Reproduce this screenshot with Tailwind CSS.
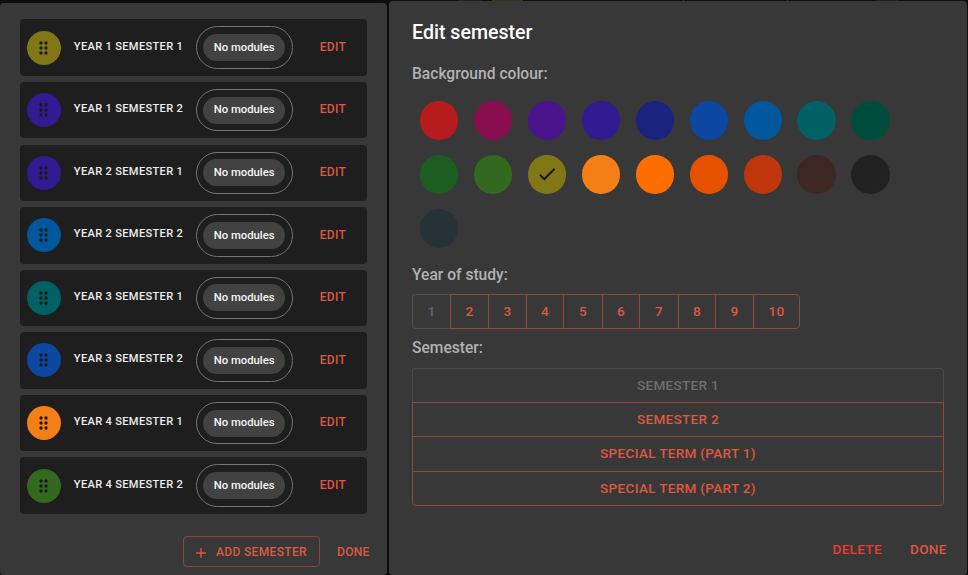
<!DOCTYPE html>
<html lang="en">
<head>
<meta charset="utf-8">
<title>Edit semester</title>
<script src="https://cdn.jsdelivr.net/npm/@tailwindcss/browser@4"></script>
</head>
<body class="w-[968px] h-[575px] overflow-hidden bg-[#0d0d0d] font-['Roboto',sans-serif] font-medium text-[#de5842]">
<div class="relative flex h-[575px] w-[968px] gap-[2px]">
  <div class="absolute left-[458px] top-0 h-px w-[23px] bg-[#1f1f1f]"></div>
  <div class="absolute left-[492px] top-0 h-px w-[31px] bg-[#3d380b]"></div>
  <div class="absolute left-[683px] top-0 h-px w-px bg-[#3a3a3a]"></div>
  <div class="absolute left-[787px] top-0 h-px w-px bg-[#3a3a3a]"></div>
  <div class="absolute left-[876px] top-0 h-px w-[23px] bg-[#1f1f1f]"></div>

  <section class="mt-[2.5px] flex h-[572.5px] w-[387px] shrink-0 flex-col rounded-[4px] bg-[#383838] pl-5 pr-5 pt-[16.9px]">
    <div id="semesters" class="flex flex-col gap-[6.2px]"></div>
    <div class="mt-[22.5px] -mr-[3px] flex items-center justify-end">
      <button class="flex h-[31px] w-[137.5px] items-center rounded-[4px] border border-[#8b463b] pl-[12px] text-[12px] tracking-[0.34px]">
        <svg class="mr-[10.5px] mt-[2px] h-[10px] w-[10px]" viewBox="0 0 10 10" fill="none" stroke="currentColor" stroke-width="1.3"><path d="M0 5h10M5 0v10"/></svg>
        <span class="whitespace-nowrap">ADD SEMESTER</span>
      </button>
      <button class="ml-[17px] w-[33px] whitespace-nowrap text-left text-[12px] tracking-[0.3px]">DONE</button>
    </div>
  </section>

  <section class="mt-px flex h-[574px] w-[578px] shrink-0 flex-col rounded-[4px] bg-[#383838] pl-[23px] pr-6">
    <h2 class="mt-[19px] h-[26px] text-[19.6px] leading-[26px] text-white">Edit semester</h2>
    <p class="mt-[17px] h-[22px] text-[15.6px] leading-[22px] text-[#b2b2b2]">Background colour:</p>
    <div id="colours" class="mt-[16px] ml-[7.7px] grid h-[147px] grid-cols-[repeat(9,38.6px)] gap-x-[15.38px] gap-y-[15.4px]"></div>
    <p class="mt-[16px] h-[22px] text-[15.6px] leading-[22px] text-[#b2b2b2]">Year of study:</p>
    <div class="mt-[8px] flex h-[35px] text-[13.6px] tracking-[0.3px]">
      <button class="w-[38px] rounded-l-[4px] border border-r-0 border-[#515151] text-[#696969]">1</button>
      <button class="w-[38px] border border-r-0 border-[#92483c]">2</button>
      <button class="w-[38px] border border-r-0 border-[#92483c]">3</button>
      <button class="w-[37px] border border-r-0 border-[#92483c]">4</button>
      <button class="w-[39px] border border-r-0 border-[#92483c]">5</button>
      <button class="w-[37px] border border-r-0 border-[#92483c]">6</button>
      <button class="w-[39px] border border-r-0 border-[#92483c]">7</button>
      <button class="w-[37px] border border-r-0 border-[#92483c]">8</button>
      <button class="w-[38px] border border-r-0 border-[#92483c]">9</button>
      <button class="w-[47px] rounded-r-[4px] border border-[#92483c]">10</button>
    </div>
    <p class="mt-[8px] h-[22px] text-[15.6px] leading-[22px] text-[#b2b2b2]">Semester:</p>
    <div class="mt-[8.5px] flex w-[532px] flex-col text-[13.6px] tracking-[0.28px]">
      <button class="h-[34.5px] rounded-t-[4px] border border-b-0 border-[#4a4a4a] text-[#6e6e6e]">SEMESTER 1</button>
      <button class="h-[34px] border border-b-0 border-[#92483c]">SEMESTER 2</button>
      <button class="h-[35px] border border-b-0 border-[#92483c] pb-px">SPECIAL TERM (PART 1)</button>
      <button class="h-[34.5px] rounded-b-[4px] border border-[#92483c]">SPECIAL TERM (PART 2)</button>
    </div>
    <div class="mt-[34px] -mr-[5px] flex h-[20px] items-center justify-end text-[13.6px] tracking-[0.28px]">
      <button class="w-[50px] whitespace-nowrap text-left text-[#e53e35]">DELETE</button>
      <button class="ml-[27.5px] w-[38px] whitespace-nowrap text-left">DONE</button>
    </div>
  </section>
</div>

<script>
const rows = [
  ['YEAR 1 SEMESTER 1', '#827717'], ['YEAR 1 SEMESTER 2', '#311b92'],
  ['YEAR 2 SEMESTER 1', '#311b92'], ['YEAR 2 SEMESTER 2', '#01579b'],
  ['YEAR 3 SEMESTER 1', '#006064'], ['YEAR 3 SEMESTER 2', '#0d47a1'],
  ['YEAR 4 SEMESTER 1', '#f57f17'], ['YEAR 4 SEMESTER 2', '#33691e']
];
document.getElementById('semesters').innerHTML = rows.map(([name, colour]) => `
  <div class="flex h-[56.4px] items-center rounded-[4px] bg-[#1e1e1e] pl-[6.8px]">
    <div class="flex h-[34px] w-[34px] shrink-0 items-center justify-center rounded-full" style="background:${colour}">
      <svg class="h-[14px] w-[9px]" viewBox="0 0 9 14" fill="#1c1a18"><circle cx="2" cy="2" r="1.65"/><circle cx="7" cy="2" r="1.65"/><circle cx="2" cy="7" r="1.65"/><circle cx="7" cy="7" r="1.65"/><circle cx="2" cy="12" r="1.65"/><circle cx="7" cy="12" r="1.65"/></svg>
    </div>
    <div class="ml-[13px] -mt-[1.4px] w-[122px] whitespace-nowrap text-[11.1px] tracking-[0.32px] text-[#ededed]">${name}</div>
    <div class="flex h-[42.4px] w-[96.8px] shrink-0 items-center justify-center rounded-full border border-[#757575]">
      <div class="flex h-[27px] w-[81.6px] items-center justify-center whitespace-nowrap rounded-full bg-[#424242] pt-[1.6px] text-[11.3px] text-[#f5f5f5]">No modules</div>
    </div>
    <button class="ml-[27.2px] -mt-[1.4px] whitespace-nowrap text-[12px] tracking-[0.3px]">EDIT</button>
  </div>`).join('');
const colours = ['#b71c1c','#880e4f','#4a148c','#311b92','#1a237e','#0d47a1','#01579b','#006064','#004d40','#1b5e20','#33691e','#827717','#f57f17','#ff6f00','#e65100','#bf360c','#3e2723','#212121','#263238'];
document.getElementById('colours').innerHTML = colours.map((c, i) => `
  <div class="flex h-[38.6px] w-[38.6px] items-center justify-center rounded-full" style="background:${c}">${i === 11 ? '<svg class="h-[22px] w-[22px]" viewBox="0 0 24 24" fill="#141414"><path d="M9 16.17 4.83 12l-1.42 1.41L9 19 21 7l-1.41-1.41z"/></svg>' : ''}</div>`).join('');
</script>
</body>
</html>
